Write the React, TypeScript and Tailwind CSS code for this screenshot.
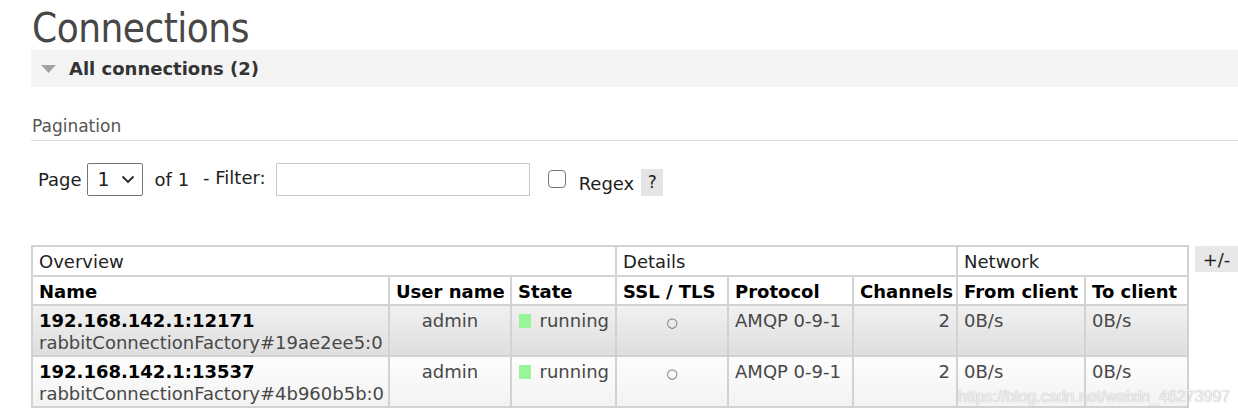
import React from "react";

const FONT = { fontFamily: "'DejaVu Sans', Verdana, sans-serif" };

type Row = {
  host: string;
  factory: string;
  alt: boolean;
};

const rows: Row[] = [
  { host: "192.168.142.1:12171", factory: "rabbitConnectionFactory#19ae2ee5:0", alt: true },
  { host: "192.168.142.1:13537", factory: "rabbitConnectionFactory#4b960b5b:0", alt: false },
];

export default function App() {
  const th = "border-r-2 border-b-2 border-[#d2d2d2] px-[6px] leading-[23px] text-left align-middle whitespace-nowrap";
  const td = "border-r-2 border-b-2 border-[#d2d2d2] px-[6px] pt-[4px] pb-[1px] leading-[22px] align-top whitespace-nowrap";
  return (
    <div className="w-[1238px] h-[415px] bg-white overflow-hidden text-[18px] text-[#222]" style={FONT}>
      <h1
        className="pl-[32px] pt-[6px] h-[50px] text-[40px] leading-[44px] text-[#474747] tracking-[-0.5px]"
        style={{ fontFamily: "'DejaVu Sans Condensed', 'DejaVu Sans', sans-serif" }}
      >
        Connections
      </h1>
      <div className="ml-[31px] h-[37px] bg-[#f4f4f4] flex items-center pl-[10px]">
        <svg width="15" height="8" viewBox="0 0 15 8" className="mr-[13px] mt-[1px]">
          <polygon points="0,0 15,0 7.5,8" fill="#a3a3a3" />
        </svg>
        <span className="font-bold text-[#333] text-[18px]">All connections (2)</span>
      </div>

      <div className="ml-[31px] mt-[28px] border-b border-[#dddddd] pb-[3px]">
        <div className="pl-[1px] text-[17px] leading-[22px] text-[#555]">Pagination</div>
      </div>

      <div className="ml-[38px] mt-[22px] flex items-center h-[33px]">
        <span className="text-[#1d1d1d]">Page</span>
        <div className="ml-[5px] w-[56px] h-[33px] border border-[#767676] rounded-[2px] flex items-center pl-[10px] pr-[7px] justify-between">
          <span className="text-[#1d1d1d] text-[19px]">1</span>
          <svg width="14" height="9" viewBox="0 0 14 9">
            <path d="M1.5 1.5 L7 7 L12.5 1.5" fill="none" stroke="#222" strokeWidth="1.8" />
          </svg>
        </div>
        <span className="ml-[12px] text-[#1d1d1d]">of 1</span>
        <span className="ml-[14px] text-[#1d1d1d] -mt-[5px]">- Filter:</span>
        <div className="ml-[10px] w-[254px] h-[33px] border border-[#cacaca] bg-white" />
        <div className="ml-[18px] mt-[-1px] w-[18px] h-[18px] border border-[#767676] rounded-[4px] bg-white" />
        <span className="ml-[13px] mt-[8px] text-[#1d1d1d]">Regex</span>
        <span className="ml-[7px] mt-[6px] h-[27px] w-[22px] bg-[#e4e4e4] flex items-center justify-center text-[17px] text-[#222]">?</span>
      </div>

      <div className="ml-[31px] mt-[49px] flex items-start">
        <div className="relative">
          <table className="border-separate border-spacing-0 table-fixed border-l-2 border-t-2 border-[#d2d2d2] w-[1158px]">
            <colgroup>
              <col style={{ width: 357 }} />
              <col style={{ width: 122 }} />
              <col style={{ width: 105 }} />
              <col style={{ width: 112 }} />
              <col style={{ width: 125 }} />
              <col style={{ width: 104 }} />
              <col style={{ width: 128 }} />
              <col style={{ width: 103 }} />
            </colgroup>
            <thead>
              <tr className="text-[#222] font-normal">
                <th colSpan={3} className={th + " font-normal pt-[3px] pb-[2px]"}>Overview</th>
                <th colSpan={3} className={th + " font-normal pt-[3px] pb-[2px]"}>Details</th>
                <th colSpan={2} className={th + " font-normal pt-[3px] pb-[2px]"}>Network</th>
              </tr>
              <tr className="text-black">
                <th className={th + " font-bold pt-[3px] pb-[1px]"}>Name</th>
                <th className={th + " font-bold pt-[3px] pb-[1px]"}>User name</th>
                <th className={th + " font-bold pt-[3px] pb-[1px]"}>State</th>
                <th className={th + " font-bold pt-[3px] pb-[1px]"}>SSL / TLS</th>
                <th className={th + " font-bold pt-[3px] pb-[1px]"}>Protocol</th>
                <th className={th + " font-bold pt-[3px] pb-[1px]"}>Channels</th>
                <th className={th + " font-bold pt-[3px] pb-[1px]"}>From client</th>
                <th className={th + " font-bold pt-[3px] pb-[1px]"}>To client</th>
              </tr>
            </thead>
            <tbody className="text-[#484848]">
              {rows.map((r) => {
                const bg = r.alt
                  ? "bg-linear-to-b from-[#f1f1f1] to-[#dedede]"
                  : "bg-linear-to-b from-[#fdfdfd] to-[#f3f3f3]";
                return (
                  <tr key={r.host}>
                    <td className={td + " " + bg}>
                      <div className="font-bold text-black">{r.host}</div>
                      <div>{r.factory}</div>
                    </td>
                    <td className={td + " " + bg + " text-center"}>admin</td>
                    <td className={td + " " + bg}>
                      <div className="flex items-center">
                        <span className="inline-block w-[14px] h-[14px] bg-[#98f598] mr-[9px] ml-[1px]" />
                        <span>running</span>
                      </div>
                    </td>
                    <td className={td + " " + bg + " text-center"}>
                      <span className="text-[13px] text-[#666]">○</span>
                    </td>
                    <td className={td + " " + bg}>AMQP 0-9-1</td>
                    <td className={td + " " + bg + " text-right"}>2</td>
                    <td className={td + " " + bg}>0B/s</td>
                    <td className={td + " " + bg}>0B/s</td>
                  </tr>
                );
              })}
            </tbody>
          </table>
          <div
            className="absolute left-[927px] top-[142px] text-[16px] leading-[20px] text-[#f2f2f2] whitespace-nowrap pointer-events-none"
            style={{ fontFamily: "'Liberation Sans', Arial, sans-serif", textShadow: "0 0 1px #9a9a9a" }}
          >
            https://blog.csdn.net/weixin_46273997
          </div>
        </div>
        <div className="ml-[6px] mt-[1px] w-[43px] h-[26px] bg-[#e8e8e8] flex items-center justify-center text-[18px] text-[#222]">
          +/-
        </div>
      </div>
    </div>
  );
}
